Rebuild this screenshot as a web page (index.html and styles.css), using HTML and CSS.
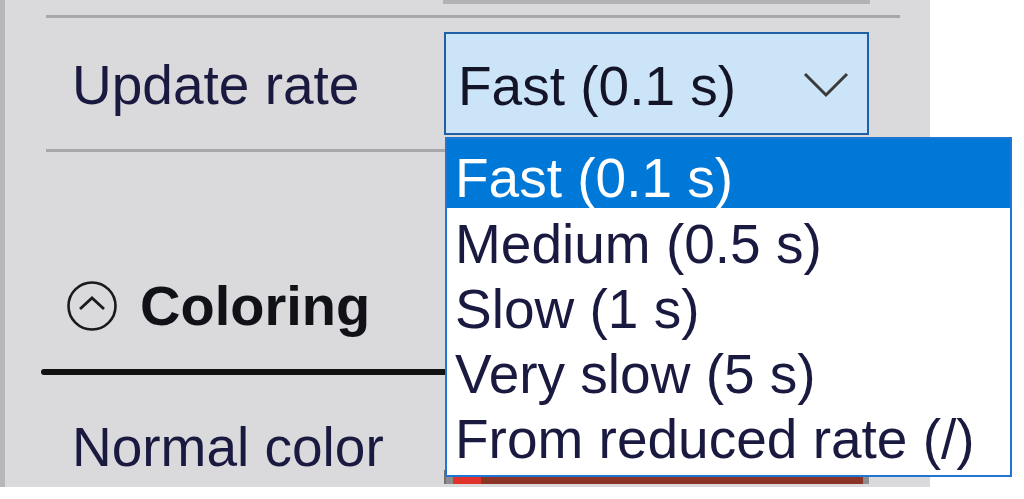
FILE: index.html
```html
<!DOCTYPE html>
<html lang="en">
<head>
<meta charset="utf-8">
<title>Update rate</title>
<link rel="stylesheet" href="styles.css">
</head>
<body>
<div class="screen">
  <div class="panel">
    <div class="topbar"></div>
    <div class="sep sep1"></div>
    <div class="row rate-row">
      <span class="label">Update rate</span>
      <div class="combo">
        <span class="combo-text">Fast (0.1 s)</span>
        <svg class="chev" viewBox="0 0 46 26" width="46" height="26"><path d="M2 2 L23 23 L44 2" fill="none" stroke="#3a3a3a" stroke-width="3"/></svg>
      </div>
    </div>
    <div class="sep sep2"></div>
    <div class="section-head">
      <svg class="collapse-icon" viewBox="0 0 50 50" width="50" height="50"><circle cx="25" cy="25" r="23.5" fill="none" stroke="#1a1a1a" stroke-width="2.6"/><path d="M13 28 L25 17 L37 28" fill="none" stroke="#1a1a1a" stroke-width="2.8"/></svg>
      <span class="section-title">Coloring</span>
    </div>
    <div class="section-rule"></div>
    <div class="row color-row">
      <span class="label">Normal color</span>
      <div class="swatch-box"><div class="swatch"></div></div>
    </div>
  </div>
  <div class="dropdown">
    <div class="opt sel">Fast (0.1 s)</div>
    <div class="opt">Medium (0.5 s)</div>
    <div class="opt">Slow (1 s)</div>
    <div class="opt">Very slow (5 s)</div>
    <div class="opt">From reduced rate (/)</div>
  </div>
</div>
</body>
</html>
```
FILE: styles.css
```css
html, body {
  margin: 0;
  padding: 0;
  background: #ffffff;
}
body {
  font-family: "Liberation Sans", Arial, sans-serif;
  width: 1024px;
  height: 499px;
  overflow: hidden;
}
.screen {
  position: relative;
  width: 1024px;
  height: 499px;
}
.panel {
  width: 925px;
  height: 487px;
  background: #dad9dc;
  border-left: 5px solid #b7b6b9;
  overflow: hidden;
}
.topbar {
  margin-left: 438px;
  width: 427px;
  height: 4px;
  background: #b2b2b4;
}
.sep {
  height: 3px;
  background: #a8a8aa;
  margin-left: 41px;
  width: 854px;
}
.sep1 { margin-top: 11px; }
.sep2 { margin-top: 14px; }
.row {
  display: flex;
  align-items: flex-start;
}
.rate-row {
  margin-top: 14px;
  height: 103px;
}
.label {
  flex: none;
  font-size: 55px;
  line-height: 55px;
  color: #1a1a40;
  margin-left: 67px;
  width: 372px;
  margin-top: 26.4px;
  white-space: nowrap;
}
.combo {
  flex: none;
  box-sizing: border-box;
  width: 425px;
  height: 103px;
  border: 2px solid #1f5fa6;
  background: #cce4f7;
  display: flex;
  align-items: flex-start;
  padding-left: 12px;
}
.combo-text {
  font-size: 55px;
  line-height: 55px;
  margin-top: 25.4px;
  color: #141428;
  white-space: nowrap;
}
.chev {
  margin-left: auto;
  margin-right: 18px;
  margin-top: 38px;
}
.section-head {
  display: flex;
  align-items: flex-start;
  margin-top: 125px;
  height: 56px;
}
.collapse-icon {
  margin-left: 62px;
  margin-top: 4px;
  flex: none;
}
.section-title {
  font-size: 56px;
  line-height: 56px;
  font-weight: bold;
  color: #111118;
  margin-left: 23px;
  margin-top: 0.6px;
}
.section-rule {
  margin-top: 36px;
  margin-left: 36px;
  width: 859px;
  height: 6px;
  background: #111111;
  border-radius: 3px 0 0 3px;
}
.color-row {
  margin-top: 19px;
  height: 103px;
}
.swatch-box {
  flex: none;
  box-sizing: border-box;
  width: 425px;
  height: 14px;
  margin-top: 76px;
  border-left: 2px solid #707070;
  background: #8d8d8f;
}
.swatch {
  margin-left: 7px;
  width: 410px;
  height: 100%;
  background: linear-gradient(to right, #e0322a 0, #e0322a 28px, #8c3426 28px);
}
.dropdown {
  position: absolute;
  left: 445px;
  top: 137px;
  width: 567px;
  box-sizing: border-box;
  border: 2px solid #2176d4;
  background: #ffffff;
  padding-bottom: 6px;
}
.opt {
  box-sizing: border-box;
  height: 65.25px;
  padding: 8.65px 0 0 8px;
  font-size: 55px;
  line-height: 55px;
  color: #1a1a40;
  white-space: nowrap;
}
.opt.sel {
  height: 69px;
  padding-top: 12.4px;
  background: #0078d7;
  color: #ffffff;
}
```
